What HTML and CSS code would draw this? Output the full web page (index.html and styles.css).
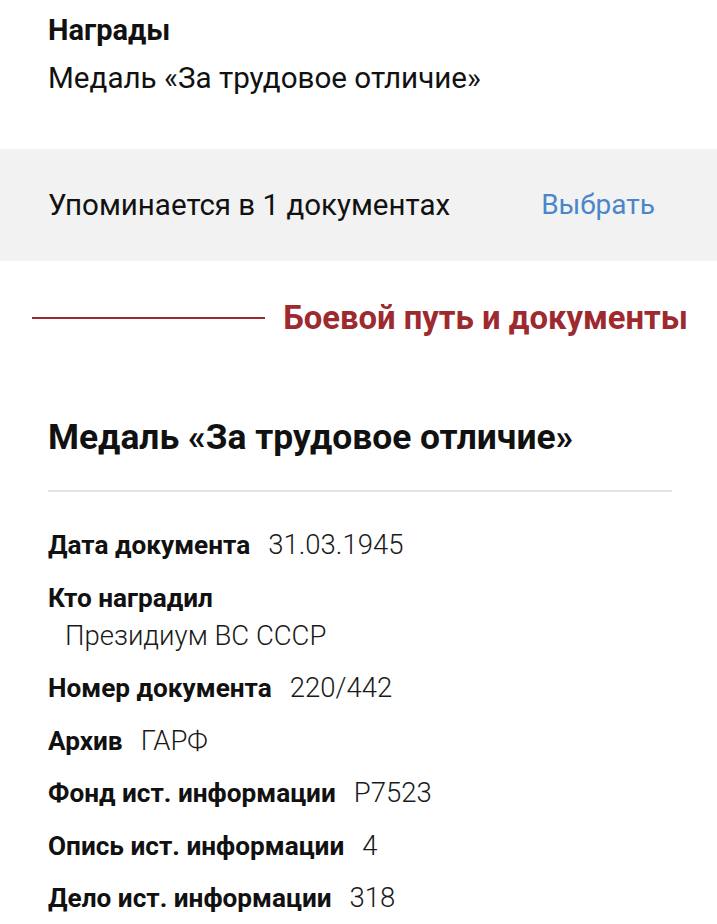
FILE: index.html
```html
<!DOCTYPE html>
<html lang="ru">
<head>
<meta charset="utf-8">
<title>Награды</title>
<link rel="stylesheet" href="styles.css">
</head>
<body>
<section class="awards">
  <div class="awards-title">Награды</div>
  <div class="awards-value">Медаль «За трудовое отличие»</div>
</section>

<section class="mentions">
  <span class="mentions-text">Упоминается в 1 документах</span>
  <a class="mentions-link" href="#">Выбрать</a>
</section>

<section class="section-head">
  <span class="section-line"></span>
  <h2 class="section-title">Боевой путь и документы</h2>
</section>

<section class="doc">
  <h3 class="doc-title">Медаль «За трудовое отличие»</h3>
  <div class="doc-divider"></div>
  <div class="doc-rows">
    <div class="row"><span class="label">Дата документа</span><span class="value">31.03.1945</span></div>
    <div class="row row-block"><div class="label">Кто наградил</div><div class="value value-block">Президиум ВС СССР</div></div>
    <div class="row"><span class="label">Номер документа</span><span class="value">220/442</span></div>
    <div class="row"><span class="label">Архив</span><span class="value">ГАРФ</span></div>
    <div class="row"><span class="label">Фонд ист. информации</span><span class="value">Р7523</span></div>
    <div class="row"><span class="label">Опись ист. информации</span><span class="value">4</span></div>
    <div class="row"><span class="label">Дело ист. информации</span><span class="value">318</span></div>
  </div>
</section>
</body>
</html>
```
FILE: styles.css
```css
html, body {
  margin: 0;
  padding: 0;
  background: #ffffff;
}
body {
  font-family: Roboto, "Noto Sans", sans-serif;
  color: #111111;
  overflow: hidden;
}

.awards {
  padding: 10px 48px 0 48px;
}
.awards-title {
  font-size: 29px;
  font-weight: 700;
  line-height: 40px;
}
.awards-value {
  margin-top: 8px;
  font-size: 29.6px;
  font-weight: 400;
  line-height: 40px;
}

.mentions {
  margin-top: 51px;
  height: 112px;
  background: #f2f2f2;
  display: flex;
  align-items: center;
  justify-content: space-between;
  padding: 0 62px 0 48px;
}
.mentions-text {
  font-size: 29.5px;
  line-height: 40px;
}
.mentions-link {
  font-size: 28px;
  line-height: 40px;
  color: #4a86c9;
  text-decoration: none;
}

.section-head {
  margin-top: 37px;
  display: flex;
  align-items: center;
  gap: 18px;
  padding: 0 29px 0 32px;
}
.section-line {
  flex: 1;
  height: 2px;
  background: #9d2a2e;
}
.section-title {
  margin: 0;
  font-size: 32.8px;
  font-weight: 700;
  line-height: 40px;
  color: #9d2a2e;
  white-space: nowrap;
}

.doc {
  padding: 0 45px 0 48px;
}
.doc-title {
  margin: 77px 0 0 0;
  font-size: 35.4px;
  font-weight: 700;
  line-height: 44px;
}
.doc-divider {
  margin-top: 31px;
  height: 2px;
  background: #e3e3e3;
}
.doc-rows {
  margin-top: 35px;
  display: flex;
  flex-direction: column;
  gap: 16.5px;
}
.row {
  font-size: 26.2px;
  line-height: 36px;
  white-space: nowrap;
}
.label {
  font-weight: 700;
}
.value {
  font-size: 27.5px;
  font-weight: 300;
  color: #1a1a1a;
  margin-left: 18px;
}
.value-block {
  margin: 2px 0 0 0;
  padding-left: 17px;
}
```
